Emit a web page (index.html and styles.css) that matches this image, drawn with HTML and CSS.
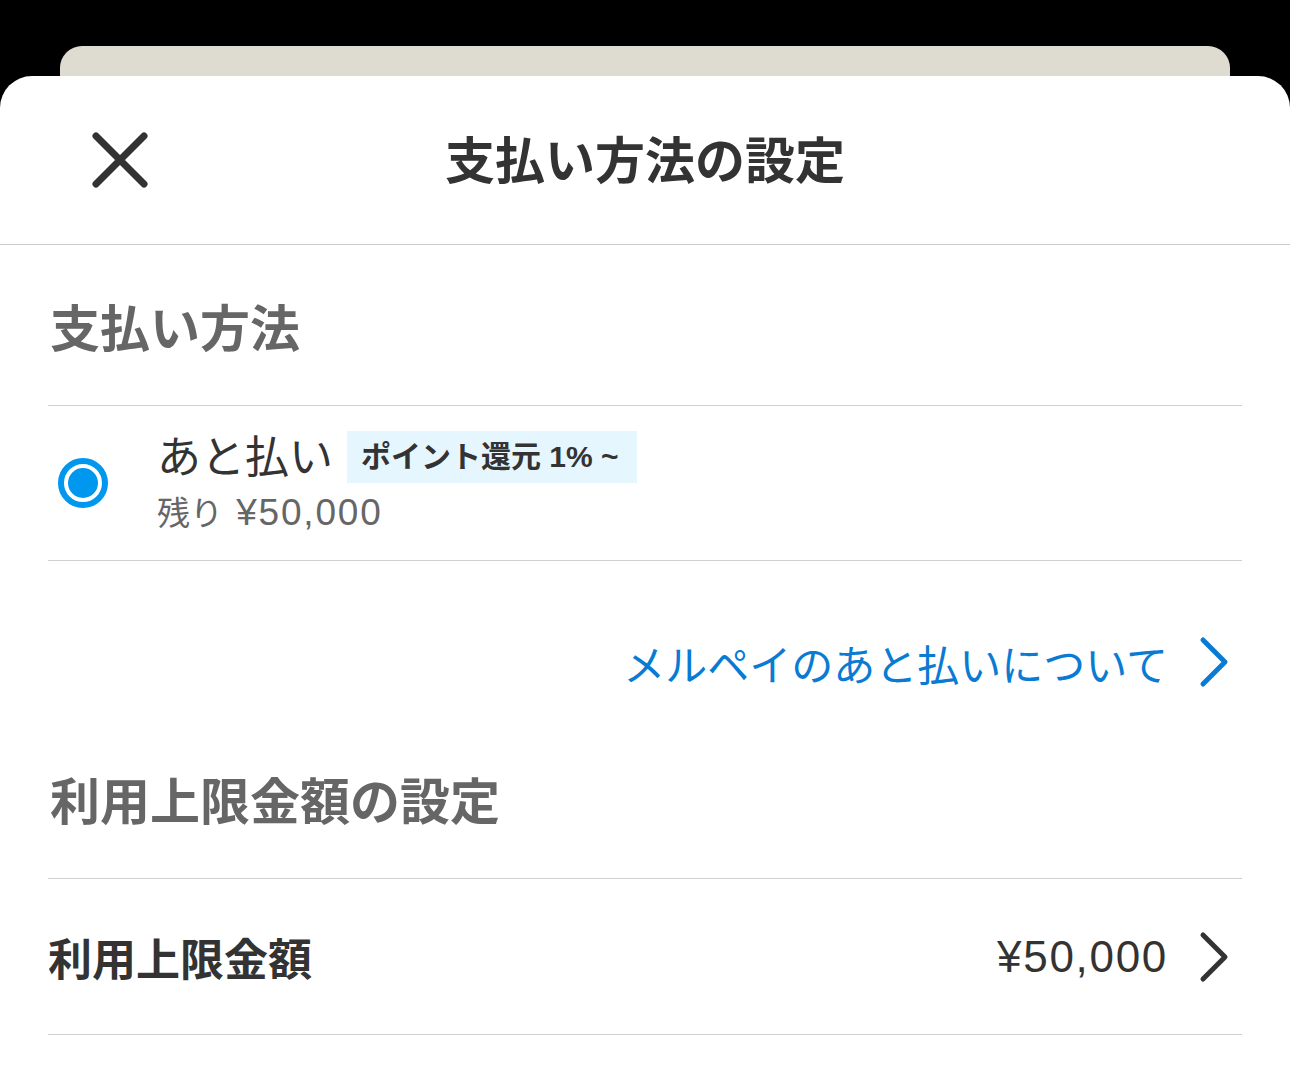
FILE: index.html
```html
<!DOCTYPE html>
<html lang="ja">
<head>
	<meta charset="UTF-8">
	<title>支払い方法の設定</title>
	<link rel="stylesheet" href="styles.css">
</head>
<body>
	<div class="backCard"></div>
	<div class="sheet">
		<div class="header">
			<div class="closeButton">
				<svg width="56" height="56" viewBox="0 0 56 56">
					<path d="M4 4 L52 52 M52 4 L4 52" stroke="#333" stroke-width="7" stroke-linecap="round" fill="none"/>
				</svg>
			</div>
			<div class="title">支払い方法の設定</div>
			<div></div>
		</div>

		<div class="sectionTitle first">支払い方法</div>
		<div class="list">
			<div class="methodRow">
				<div class="radio"><div class="dot"></div></div>
				<div class="methodInfo">
					<div class="methodName">
						<span>あと払い</span>
						<span class="badge">ポイント還元 1% ~</span>
					</div>
					<div class="remain">残り <span class="amount">¥50,000</span></div>
				</div>
			</div>
		</div>

		<div class="linkRow">
			<span>メルペイのあと払いについて</span>
			<svg class="chevron" width="32" height="52" viewBox="0 0 32 52">
				<path d="M5 4 L27 26 L5 48" stroke="#0a7bd3" stroke-width="5" stroke-linecap="round" stroke-linejoin="round" fill="none"/>
			</svg>
		</div>

		<div class="sectionTitle second">利用上限金額の設定</div>
		<div class="list">
			<div class="limitRow">
				<span class="limitLabel">利用上限金額</span>
				<span class="limitValue">¥50,000</span>
				<svg class="chevron" width="32" height="52" viewBox="0 0 32 52">
					<path d="M5 4 L27 26 L5 48" stroke="#333" stroke-width="5" stroke-linecap="round" stroke-linejoin="round" fill="none"/>
				</svg>
			</div>
		</div>
	</div>
</body>
</html>
```

FILE: styles.css
```css
*{
	margin: 0;
	padding: 0;
	box-sizing: border-box;
}
body{
	background-color: #000;
	font-family: "Liberation Sans", "Noto Sans CJK JP", sans-serif;
	color: #333;
	overflow: hidden;
}
.backCard{
	height: 46px;
	margin: 46px 60px 0;
	margin-bottom: -16px;
	background-color: #dedcd1;
	border-radius: 22px 22px 0 0;
}
.sheet{
	position: relative;
	min-height: 1000px;
	background-color: #fff;
	border-radius: 32px 32px 0 0;
}
.header{
	display: grid;
	grid-template-columns: 1fr auto 1fr;
	align-items: center;
	height: 169px;
	padding-bottom: 6px;
	border-bottom: 1px solid #cbcbcb;
}
.closeButton{
	display: flex;
	padding-left: 92px;
	padding-top: 6px;
}
.title{
	font-family: "Noto Sans CJK JP", sans-serif;
	font-size: 50px;
	font-weight: bold;
	line-height: 1;
}
.sectionTitle{
	display: flex;
	align-items: center;
	padding-left: 50px;
	font-family: "Noto Sans CJK JP", sans-serif;
	font-size: 50px;
	font-weight: bold;
	line-height: 1;
	color: #666;
}
.sectionTitle.first{
	height: 160px;
}
.sectionTitle.second{
	height: 115px;
	padding-bottom: 46px;
}
.list{
	margin: 0 48px;
	border-top: 1px solid #d0d0d0;
}
.methodRow{
	display: flex;
	align-items: center;
	height: 155px;
	border-bottom: 1px solid #d0d0d0;
}
.radio{
	display: flex;
	align-items: center;
	justify-content: center;
	width: 50px;
	height: 50px;
	margin-left: 10px;
	margin-right: 49px;
	border: 6px solid #0097ee;
	border-radius: 50%;
}
.radio>.dot{
	width: 30px;
	height: 30px;
	border-radius: 50%;
	background-color: #0097ee;
}
.methodInfo{
	display: flex;
	flex-direction: column;
	gap: 6px;
	padding-top: 2px;
}
.methodName{
	display: flex;
	align-items: center;
	gap: 14px;
	font-size: 44px;
	line-height: 1.2;
}
.badge{
	display: flex;
	align-items: center;
	height: 52px;
	margin-top: -4px;
	padding: 0 18px 0 14px;
	background-color: #e6f6fe;
	font-size: 30px;
	font-weight: bold;
}
.remain{
	font-size: 33px;
	line-height: 1.2;
	color: #666;
}
.remain>.amount{
	margin-left: 4px;
	font-size: 37px;
	letter-spacing: 1.8px;
}
.linkRow{
	display: flex;
	align-items: center;
	justify-content: flex-end;
	gap: 30px;
	height: 202px;
	padding-right: 60px;
	font-size: 42px;
	color: #0a7bd3;
}
.limitRow{
	display: flex;
	align-items: center;
	height: 156px;
	padding-right: 12px;
	border-bottom: 1px solid #d0d0d0;
}
.limitLabel{
	flex: 1;
	font-family: "Noto Sans CJK JP", sans-serif;
	font-size: 44px;
	font-weight: bold;
}
.limitValue{
	margin-right: 30px;
	font-size: 44px;
	letter-spacing: 1.7px;
}
.chevron{
	display: block;
}
```
